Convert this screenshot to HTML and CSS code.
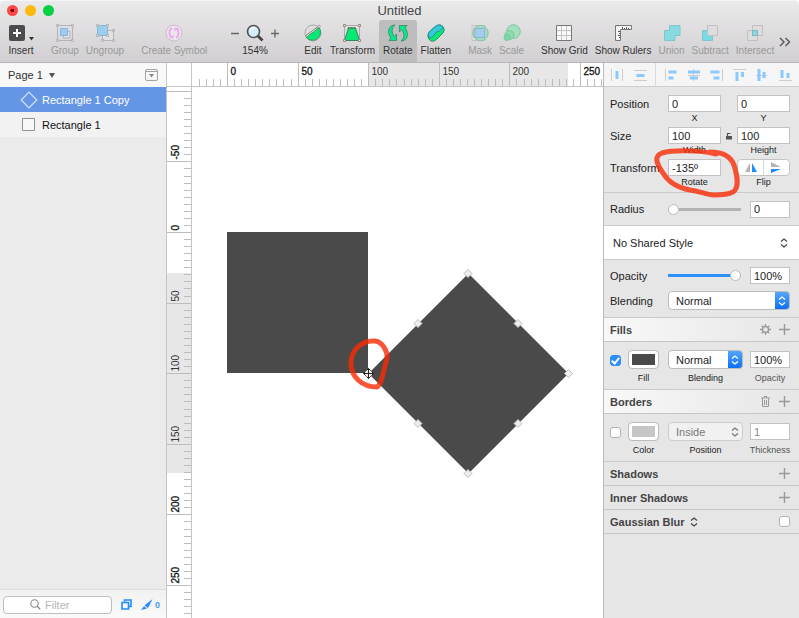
FILE: index.html
```html
<!DOCTYPE html>
<html lang="en">
<head>
<meta charset="utf-8">
<title>Untitled</title>
<link rel="stylesheet" href="styles.css">
</head>
<body>
<div class="window">
  <header class="chrome">
    <div class="titlebar">
      <div class="lights"><i class="light red"></i><i class="light yellow"></i><i class="light green"></i></div>
      <h1>Untitled</h1>
    </div>
    <nav class="toolbar" aria-label="Toolbar">
      <div class="group">
        <button class="tool insert" type="button"><svg width="26" height="18" viewBox="0 0 26 18"><rect x="1" y="1" width="16" height="16" rx="2" fill="#4c4b4d"/><path d="M5 9h8M9 5v8" stroke="#fff" stroke-width="2"/><path d="M21 13h5l-2.500 3.500z" fill="#333"/></svg><span>Insert</span></button>
      </div>
      <div class="group">
        <button class="tool" type="button" disabled><svg width="18" height="18" viewBox="0 0 18 18"><g fill="none" stroke="#b4b3b5"><path d="M1.500 1.500h15v15h-15z"/><path d="M7.500 7.500h6.500v6.500h-6.500z" fill="#e4e4e4"/></g><path d="M4.500 4.500h7v7h-7z" fill="#9dcdec" stroke="#84b7de"/><g fill="#e0e0e0" stroke="#b4b3b5"><path d="M.5.5h2v2h-2zM15.500.5h2v2h-2zM.5 15.500h2v2h-2zM15.500 15.500h2v2h-2z"/></g></svg><span>Group</span></button>
        <button class="tool" type="button" disabled><svg width="20" height="18" viewBox="0 0 20 18"><path d="M7.500 6.500h11v10h-11z" fill="#e2e1e3" stroke="#b4b3b5"/><path d="M2.500 1.500h10v10h-10z" fill="#9dcdec" stroke="#84b7de"/><g fill="#e0e0e0" stroke="#b4b3b5"><path d="M1.500.5h2v2h-2zM11.500.5h2v2h-2zM1.500 10.500h2v2h-2zM11.500 10.500h2v2h-2zM17.500 5.500h2v2h-2zM17.500 15.500h2v2h-2zM6.500 15.500h2v2h-2z"/></g></svg><span>Ungroup</span></button>
      </div>
      <div class="group">
        <button class="tool" type="button" disabled><svg width="18" height="18" viewBox="0 0 18 18"><circle cx="9" cy="9" r="8" fill="#ece5ec" stroke="#d0b7d2"/><g fill="none" stroke="#eba6ec" stroke-width="1.800"><path d="M7 4.500Q4.500 5 4.500 9t3 4.500M11 13.500q2.500-.5 2.500-4.500t-3-4.500"/><path d="M5 13.500h3v-2.500M13 4.500h-3v2.500" stroke-width="1.200"/></g></svg><span>Create Symbol</span></button>
      </div>
      <div class="group zoom">
        <button class="step" type="button" aria-label="Zoom out"><svg width="9" height="18" viewBox="0 0 9 18"><path d="M1 9.500h8" stroke="#666" stroke-width="1.300"/></svg></button>
        <button class="tool" type="button"><svg width="18" height="18" viewBox="0 0 18 18"><path d="M11.500 11.500l5 5" stroke="#444" stroke-width="2.800"/><circle cx="7.500" cy="7.500" r="6" fill="#d5edf9" stroke="#555" stroke-width="1.700"/><path d="M4 6q1-3 5-2" stroke="#fff" stroke-width="1.500" fill="none"/></svg><span>154%</span></button>
        <button class="step" type="button" aria-label="Zoom in"><svg width="9" height="18" viewBox="0 0 9 18"><path d="M0 9.500h8M4 5.500v8" stroke="#666" stroke-width="1.300"/></svg></button>
      </div>
      <div class="group paths">
        <button class="tool" type="button"><svg width="18" height="18" viewBox="0 0 18 18"><circle cx="9" cy="9" r="8" fill="#dedede" stroke="#aaa"/><path d="M15 3.500A8 8 0 1 1 2 13C5 13 5 10 8 9s4-4 7-5.500z" fill="#08e874" stroke="#419768"/><path d="M1 12L15 2" stroke="#888"/><circle cx="15" cy="2.500" r="1.300" fill="#eee" stroke="#999"/></svg><span>Edit</span></button>
        <button class="tool" type="button"><svg width="18" height="18" viewBox="0 0 18 18"><path d="M1.500 1.500h15v15h-15z" fill="none" stroke="#aaa"/><path d="M5.500 4h7l4 12.500h-15z" fill="#08e874" stroke="#378457"/><path d="M4.500 4h9" stroke="#555" stroke-dasharray="2 1"/><g fill="#eee" stroke="#938989"><path d="M.5.5h2v2h-2zM15.500.5h2v2h-2zM.5 15.500h2v2h-2zM15.500 15.500h2v2h-2z"/></g></svg><span>Transform</span></button>
        <button class="tool active" type="button"><svg width="22" height="18" viewBox="0 0 22 18"><g fill="#08e88b" stroke="#318562" stroke-width=".8"><path d="M8 1C1.500 1-.5 8.500 4 14L2 16.500H9.500V10L7.500 12.500C4.500 9.500 4 4 8 1z"/><path transform="rotate(180 11 9)" d="M8 1C1.500 1-.5 8.500 4 14L2 16.500H9.500V10L7.500 12.500C4.500 9.500 4 4 8 1z"/></g></svg><span>Rotate</span></button>
        <button class="tool" type="button"><svg width="18" height="18" viewBox="0 0 18 18"><path d="M2 8L9 2Q13.500-.5 16 2.500T16 9L9.500 15.500Q5 19 2.200 15.500T2 8z" fill="#08e874" stroke="#338b64"/><path d="M2 8L9 2C12 0 15 1 15.500 3.500 14 7.500 11 7 9.500 8S7 13 2.500 14Q.2 11 2 8z" fill="#36c9d8" stroke="#2a8f9a"/></svg><span>Flatten</span></button>
      </div>
      <div class="group">
        <button class="tool" type="button" disabled><svg width="18" height="18" viewBox="0 0 18 18"><path d="M1 1.500h13v15H1z" fill="#dedede" stroke="#c4c3c5"/><circle cx="9.500" cy="9" r="7.700" fill="#a1dfbd" stroke="#8cbfa5"/><path d="M4 4.500h9.500v9H4z" fill="#a4cdea" stroke="#8bafdf"/></svg><span>Mask</span></button>
        <button class="tool" type="button" disabled><svg width="18" height="18" viewBox="0 0 18 18"><g stroke="#7fc4a0"><circle cx="10.500" cy="7.500" r="6.800" fill="#a1dfbd"/><circle cx="6.500" cy="11" r="4.500" fill="#8cdcb0"/><circle cx="4" cy="13.500" r="3" fill="#78dca5"/></g></svg><span>Scale</span></button>
      </div>
      <div class="group">
        <button class="tool" type="button"><svg width="18" height="18" viewBox="0 0 18 18"><path d="M1.500 1.500h15v15h-15z" fill="#f8f8f8" stroke="#777"/><path d="M6.500 2v14M11.500 2v14M2 6.500h14M2 11.500h14" stroke="#c4c4c4"/></svg><span>Show Grid</span></button>
        <button class="tool" type="button"><svg width="18" height="18" viewBox="0 0 18 18"><path d="M1.500 1.500h16v4h-11v11h-5z" fill="#f5f5f5" stroke="#777"/><path d="M8.500 5V3M10.500 5V4M12.500 5V3M14.500 5V4M6 7.500H4M6 9.500H5M6 11.500H4M6 13.500H5" stroke="#555"/></svg><span>Show Rulers</span></button>
        <button class="tool" type="button" disabled><svg width="18" height="18" viewBox="0 0 18 18"><path d="M6.500 1.500h10.500v10h-5v5H1.500v-10h5z" fill="#87dae0" stroke="#83c4cc"/></svg><span>Union</span></button>
        <button class="tool" type="button" disabled><svg width="18" height="18" viewBox="0 0 18 18"><path d="M1.500 6.500h10v10h-10z" fill="#77dbe1" stroke="#83c4cc"/><path d="M6.500 1.500h10v10h-10z" fill="#dddcde" stroke="#c0bfc1"/></svg><span>Subtract</span></button>
        <button class="tool" type="button" disabled><svg width="18" height="18" viewBox="0 0 18 18"><path d="M6.500 1.500h10v10h-10zM1.500 6.500h10v10h-10z" fill="#dddcde" stroke="#c0bfc1"/><path d="M6.500 6.500h5v5h-5z" fill="#87dae0" stroke="#83b4bc"/></svg><span>Intersect</span></button>
        <button class="step more" type="button" aria-label="More tools"><svg width="12" height="18" viewBox="0 0 12 18"><path d="M1 5l4 4-4 4M6.500 5l4 4-4 4" fill="none" stroke="#555" stroke-width="1.400"/></svg></button>
      </div>
    </nav>
  </header>

  <main class="workspace">
    <aside class="layers">
      <button class="page" type="button"><span>Page 1</span><svg width="6" height="5" viewBox="0 0 6 5"><path d="M0 0h6L3 5z" fill="#555"/></svg><svg class="toggle" width="13" height="12" viewBox="0 0 13 12"><rect x=".5" y=".5" width="12" height="11" rx="1.500" fill="#f6f6f6" stroke="#a5a5a5"/><path d="M1 2.500h11" stroke="#a5a5a5"/><path d="M4 5h5L6.500 8.500z" fill="#888"/></svg></button>
      <ul class="list">
        <li class="layer selected"><svg width="18" height="18" viewBox="0 0 18 18"><path d="M9 1.200L16.800 9 9 16.800 1.200 9z" fill="none" stroke="#d6e4fb" stroke-width="1.200"/></svg>Rectangle 1 Copy</li>
        <li class="layer"><svg width="18" height="18" viewBox="0 0 18 18"><path d="M2.500 2.500h12v12h-12z" fill="#f8f8f8" stroke="#929292"/></svg>Rectangle 1</li>
      </ul>
      <footer class="filterbar">
        <label class="filter"><svg width="11" height="11" viewBox="0 0 11 11"><circle cx="4.500" cy="4.500" r="3.700" fill="none" stroke="#888" stroke-width="1.100"/><path d="M7.200 7.200l3 3" stroke="#888" stroke-width="1.300"/></svg><input type="text" placeholder="Filter" aria-label="Filter"></label>
        <button type="button" aria-label="Slices"><svg width="11" height="11" viewBox="0 0 11 11"><path d="M3.500 2.500v-1.500h6.500v6.500h-2M1 3.500h6.500v6.500H1z" fill="none" stroke="#1e8bff" stroke-width="1.600"/></svg></button>
        <button class="count" type="button"><svg width="12" height="11" viewBox="0 0 12 11"><path d="M11.500 0L7 9 3.500 6.500zM3 7.200l3 2.300L0 11z" fill="#1e8bff"/></svg><span>0</span></button>
      </footer>
    </aside>

    <section class="editor">
      <div class="corner"></div>
      <svg class="ruler ruler-x" data-axis="x"></svg>
      <svg class="ruler ruler-y" data-axis="y"></svg>
      <div class="canvas">
        <svg class="artwork" width="412" height="532">
          <path d="M35 145h141v141h-141z" fill="#4a4a4a"/>
          <path d="M276.500 186.500l100 100-100 100-100-100z" fill="#4a4a4a" stroke="#a0a0a0"/>
          <g fill="#eee" stroke="#bdbdbd">
            <path d="M276 182.500l4 4-4 4-4-4zM376.500 282.500l4 4-4 4-4-4zM276 382.500l4 4-4 4-4-4zM226 232.500l4 4-4 4-4-4zM326 232.500l4 4-4 4-4-4zM226 332.500l4 4-4 4-4-4zM326 332.500l4 4-4 4-4-4z"/>
            <path d="M176.500 281.500l5 5-5 5-5-5z"/>
          </g>
          <path d="M171.500 286.500h10M176.500 281.500v10M174.500 283.500l2-2 2 2M174.500 289.500l2 2 2-2M173.500 284.500l-2 2 2 2M179.500 284.500l2 2-2 2" fill="none" stroke="#222"/>
          <path class="marker" d="M183 254C170 253 159 263 159 276C159 290 170 300 185 300C190 297 191 284 195 272C196 265 191 255 183 254z"/>
        </svg>
      </div>
    </section>

    <aside class="inspector">
      <div class="align">
        <svg width="196" height="24" viewBox="0 0 196 24">
          <path d="M7.500 6v12M18.500 6v12M30 7.500h13M30 17.500h13M61.500 6v12M84 12.500h12M89.500 6v12M118.500 6v12M129 6.500h13M152 12.500h11M175 17.500h13" stroke="#cdcdcd" fill="none"/>
          <path d="M51.500 0v24" stroke="#dadada"/>
          <path d="M13 8v8M32.500 12.500h8M64.500 9h8M64.500 15h5M84 9h12M86 15h8M106.500 9h9M109.500 15h6M133 9v9M138.500 9v5M155 6v12M160 9v6M178 7v8M184 10v5" stroke="#8bc8fb" stroke-width="3"/>
        </svg>
      </div>
      <div class="panel geometry">
        <div class="row"><span class="name">Position</span>
          <label class="field"><input type="text" value="0"><span>X</span></label><i class="link"></i>
          <label class="field"><input type="text" value="0"><span>Y</span></label></div>
        <div class="row"><span class="name">Size</span>
          <label class="field"><input type="text" value="100"><span>Width</span></label>
          <i class="link"><svg width="8" height="8" viewBox="0 0 8 8"><path d="M1 4h6v3.500H1z" fill="#555"/><path d="M2.500 4V1.500h3" fill="none" stroke="#555" stroke-width="1.200"/></svg></i>
          <label class="field"><input type="text" value="100"><span>Height</span></label></div>
        <div class="row"><span class="name">Transform</span>
          <label class="field"><input type="text" value="-135º"><span>Rotate</span></label><i class="link"></i>
          <div class="field"><div class="flip"><button type="button" aria-label="Flip horizontally"><svg width="12" height="10" viewBox="0 0 12 10"><path d="M5 0v9H0z" fill="#b5b5b5"/><path d="M7 0v9h5z" fill="#1e8bff"/></svg></button><button type="button" aria-label="Flip vertically"><svg width="11" height="12" viewBox="0 0 11 12"><path d="M0 0l10 5H0z" fill="#b5b5b5"/><path d="M0 7h10L0 11z" fill="#1e8bff"/></svg></button></div><span>Flip</span></div></div>
      </div>
      <div class="panel radius">
        <label class="name" for="radius">Radius</label><input id="radius" class="slider" type="range" value="0"><input class="small" type="text" value="0" aria-label="Radius value">
      </div>
      <button class="shared" type="button">No Shared Style<svg width="8" height="10" viewBox="0 0 8 10"><path d="M1 3.500L4 1l3 2.500M1 6.500L4 9l3-2.500" fill="none" stroke="#444" stroke-width="1.200"/></svg></button>
      <div class="panel blend">
        <div class="line"><label class="name" for="opacity">Opacity</label><input id="opacity" class="slider full" type="range" value="100"><input class="small" type="text" value="100%" aria-label="Opacity value"></div>
        <div class="line"><label class="name" for="blend">Blending</label><div class="select"><select id="blend"><option>Normal</option></select><svg viewBox="0 0 8 10" width="8" height="10"><path d="M1 3.500L4 1l3 2.500M1 6.500L4 9l3-2.500" fill="none" stroke="currentColor" stroke-width="1.300"/></svg></div></div>
      </div>
      <h2 class="lit">Fills<span><svg width="11" height="11" viewBox="0 0 11 11"><circle cx="5.500" cy="5.500" r="3" fill="none" stroke="#999" stroke-width="1.400"/><path d="M5.500 0v2M5.500 9v2M0 5.500h2M9 5.500h2M1.600 1.600l1.500 1.500M7.900 7.900l1.500 1.500M1.600 9.400l1.500-1.500M7.900 3.100l1.500-1.500" stroke="#999" stroke-width="1.300"/></svg><svg width="11" height="11" viewBox="0 0 11 11"><path d="M0 5.500h11M5.500 0v11" stroke="#999" stroke-width="1.400"/></svg></span></h2>
      <div class="panel style">
        <input class="check" type="checkbox" checked aria-label="Fill enabled">
        <label class="cell"><button class="swatch dark" type="button" aria-label="Fill colour"></button><span>Fill</span></label>
        <label class="cell wide"><span class="select"><select><option>Normal</option></select><svg viewBox="0 0 8 10" width="8" height="10"><path d="M1 3.500L4 1l3 2.500M1 6.500L4 9l3-2.500" fill="none" stroke="currentColor" stroke-width="1.300"/></svg></span><span>Blending</span></label>
        <label class="cell amount"><input class="small" type="text" value="100%"><span>Opacity</span></label>
      </div>
      <h2 class="lit">Borders<span><svg width="11" height="11" viewBox="0 0 11 11"><path d="M1 2h9M4 1.500V.5h3v1M2.500 2.500v8h6v-8M4.500 4v5M6.500 4v5" fill="none" stroke="#999"/></svg><svg width="11" height="11" viewBox="0 0 11 11"><path d="M0 5.500h11M5.500 0v11" stroke="#999" stroke-width="1.400"/></svg></span></h2>
      <div class="panel style">
        <input class="check" type="checkbox" aria-label="Border enabled">
        <label class="cell"><button class="swatch" type="button" aria-label="Border colour"></button><span>Color</span></label>
        <label class="cell wide"><span class="select"><select disabled><option>Inside</option></select><svg viewBox="0 0 8 10" width="8" height="10"><path d="M1 3.500L4 1l3 2.500M1 6.500L4 9l3-2.500" fill="none" stroke="currentColor" stroke-width="1.300"/></svg></span><span>Position</span></label>
        <label class="cell amount"><input class="small" type="text" value="1" disabled><span>Thickness</span></label>
      </div>
      <h2>Shadows<span><svg width="11" height="11" viewBox="0 0 11 11"><path d="M0 5.500h11M5.500 0v11" stroke="#999" stroke-width="1.400"/></svg></span></h2>
      <h2>Inner Shadows<span><svg width="11" height="11" viewBox="0 0 11 11"><path d="M0 5.500h11M5.500 0v11" stroke="#999" stroke-width="1.400"/></svg></span></h2>
      <h2>Gaussian Blur<svg class="kind" width="8" height="10" viewBox="0 0 8 10"><path d="M1 3.500L4 1l3 2.500M1 6.500L4 9l3-2.500" fill="none" stroke="#444" stroke-width="1.300"/></svg><span><input class="check" type="checkbox" aria-label="Gaussian Blur"></span></h2>
      <svg class="note" width="92" height="54" viewBox="0 0 92 54"><path class="marker" d="M62 9C45 5 18 5 8 8C0 11 2 18 9 28C15 38 24 43 36 45C46 46 52 50 60 50C70 50 75 49 79 47C86 42 83 30 80 20C77 12 70 7 56 7"/></svg>
    </aside>
  </main>
</div>
<script src="rulers.js"></script>
</body>
</html>
```
FILE: styles.css
```css
* { box-sizing: border-box; }
body { margin: 0; background: #fff; color: #222; font: 11px/14px "Liberation Sans", Arial, sans-serif; }
button, input, select { font: inherit; color: inherit; }
button { border: 0; padding: 0; background: none; }
svg { display: block; flex: none; }
i { font-style: normal; }

.window { min-height: 100vh; display: flex; flex-direction: column; border-radius: 5px 5px 0 0; overflow: hidden; }
.chrome { background: linear-gradient(#ebeaeb, #d1cfd1); border-bottom: 1px solid #b8b7b8; border-top: 1px solid #f4f4f4; }
.titlebar { height: 19px; display: grid; grid-template-columns: 1fr auto 1fr; align-items: center; }
.titlebar h1 { margin: 0; font-size: 13px; line-height: 18px; font-weight: 400; color: #444; }
.lights { display: flex; gap: 7px; padding-left: 7px; }
.light { width: 11px; height: 11px; border-radius: 50%; }
.red { background: radial-gradient(#700 0 2px, #fc4744 2px); }
.yellow { background: #fdb90c; }
.green { background: #08d045; }

.toolbar { display: flex; gap: 17px; padding-left: 8px; }
.group { display: flex; gap: 7px; }
.tool { height: 42px; padding-top: 4px; display: flex; flex-direction: column; align-items: center; gap: 3px; font-size: 10px; line-height: 12px; color: #333; white-space: nowrap; }
.tool:disabled { color: #999; }
.tool.active { background: #bebdbe; border-radius: 3px 3px 0 0; padding: 4px 4px 0; margin: 0 -4px; }
.step { padding-top: 4px; align-self: flex-start; }
.more { padding-top: 13px; margin-left: -2px; }
.zoom { gap: 3px; margin: 0 7px 0 6px; }
.paths { gap: 8px; }

.workspace { flex: 1; display: grid; grid-template-columns: 167px minmax(0, 1fr) 196px; }

.layers { display: flex; flex-direction: column; background: #ebebeb; border-right: 1px solid #c4c4c4; }
.page { display: flex; align-items: center; gap: 6px; height: 24px; padding: 0 8px; background: #f8f8f8; color: #333; }
.toggle { margin-left: auto; }
.list { margin: 0; padding: 0; list-style: none; flex: 1; }
.layer { display: flex; align-items: center; gap: 4px; height: 25px; padding-left: 20px; background: #f2f2f2; color: #111; }
.layer.selected { background: #6596e6; color: #fff; }
.filterbar { display: flex; align-items: center; gap: 9px; height: 30px; padding: 0 6px 0 3px; background: linear-gradient(#f1f1f1, #fafafa); border-top: 1px solid #dcdcdc; }
.filter { flex: 1; display: flex; align-items: center; gap: 4px; height: 18px; padding-left: 26px; background: #fff; border: 1px solid #bfbfbf; border-radius: 4px; }
.filter input { width: 100%; min-width: 0; border: 0; padding: 0; background: none; }
.filter input::placeholder { color: #b5b5b5; }
.count { display: flex; align-items: center; gap: 2px; font-size: 9px; font-weight: 700; color: #4c9ef0; }

.editor { display: grid; grid-template: 24px minmax(0, 1fr) / 25px minmax(0, 1fr); background: #fff; overflow: hidden; }
.corner, .ruler-y { border-right: 1px solid #c6c6c6; }
.corner, .ruler-x { border-bottom: 1px solid #c6c6c6; }
.ruler { width: 100%; height: 100%; overflow: hidden; font-size: 10px; }
.ruler path { stroke: #bdbdbd; fill: none; }
.ruler rect { fill: #e7e7e7; }
.ruler text { fill: #333; }
.ruler text.clear { fill: #111; stroke: #111; stroke-width: .3px; }
.canvas { overflow: hidden; }
.marker { fill: none; stroke: #fa2b05; stroke-width: 5px; stroke-linecap: round; stroke-linejoin: round; opacity: .8; }

.inspector { position: relative; background: #e6e6e6; border-left: 1px solid #b9b9b9; color: #222; }
.align { height: 24px; background: #f5f5f5; border-bottom: 1px solid #cfcfcf; overflow: hidden; }
.panel { padding: 0 9px 0 6px; border-bottom: 1px solid #cacaca; }
.inspector input[type="text"] { height: 17px; padding: 0 3px; border: 1px solid #c2c2c2; border-radius: 0; background: #fff; color: #222; }
.inspector input[type="text"]:disabled { color: #888; }
.geometry { padding-top: 8px; }
.row { display: grid; grid-template-columns: 58px 1fr 16px 1fr; height: 32px; }
.row:last-child { height: 33px; }
.name { width: 58px; line-height: 18px; }
.field { display: flex; flex-direction: column; min-width: 0; font-size: 9px; line-height: 12px; text-align: center; }
.field input { width: 100%; font-size: 11px; }
.link { display: flex; height: 17px; align-items: center; justify-content: center; }
.flip { display: flex; height: 17px; background: #fff; border: 1px solid #c4c4c4; border-radius: 4px; }
.flip button { flex: 1; display: grid; place-items: center; }
.flip button + button { border-left: 1px solid #d8d8d8; }
.radius { display: flex; align-items: center; height: 33px; }
.small { width: 40px; flex: none; }
.slider { appearance: none; flex: 1; min-width: 0; height: 12px; margin: 0 9px 0 0; background: linear-gradient(#b3b3b3, #b3b3b3) center / 100% 3px no-repeat; }
.slider::-webkit-slider-thumb { appearance: none; width: 11px; height: 11px; border-radius: 50%; background: #fff; border: 1px solid #bbb; }
.slider.full { background-image: linear-gradient(#2e90fb, #2e90fb); }
.shared { display: flex; align-items: center; justify-content: space-between; width: 100%; height: 34px; padding: 0 11px 0 9px; background: #fff; border-bottom: 1px solid #cacaca; }
.blend { padding-top: 6px; padding-bottom: 7px; }
.line { display: flex; align-items: center; height: 19px; }
.line + .line { margin-top: 6px; }
.select { position: relative; flex: 1; display: block; min-width: 0; }
.select select { appearance: none; display: block; width: 100%; height: 19px; padding: 0 7px; border: 1px solid #bcbcbc; border-radius: 4px; font-size: 11px; background: linear-gradient(#58a9fd, #0a6cf5) right / 15px 100% no-repeat border-box, #fff; opacity: 1; }
.select svg { position: absolute; right: 4px; top: 5px; color: #fff; pointer-events: none; }
.select select:disabled { background: #f1f1f1; border-color: #cdcdcd; color: #777; }
.select select:disabled + svg { color: #777; }
.inspector h2 { display: flex; align-items: center; height: 24px; margin: 0; padding: 0 9px 0 6px; border-bottom: 1px solid #c6c6c6; font-size: 11px; color: #444; }
.inspector h2.lit { background: linear-gradient(90deg, #f8f8f8, #e6e6e6); }
.inspector h2 > span { display: flex; gap: 8px; margin-left: auto; }
.kind { margin-left: 5px; }
.style { display: flex; height: 48px; padding-top: 8px; }
.check { appearance: none; flex: none; width: 11px; height: 11px; margin: 0; border: 1px solid #b4b4b4; border-radius: 3px; background: #fff; }
.style .check { margin-top: 5px; }
.check:checked { border-color: #2d8efb; background: #2d8efb; display: grid; place-items: center; }
.check:checked::before { content: ""; width: 3px; height: 6px; margin-bottom: 2px; border: solid #fff; border-width: 0 2px 2px 0; rotate: 40deg; }
.cell { display: flex; flex-direction: column; gap: 3px; width: 31px; margin-left: 7px; font-size: 9px; line-height: 12px; text-align: center; white-space: nowrap; }
.cell.wide { flex: 1; width: auto; margin-left: 9px; }
.cell.wide .select { flex: none; }
.cell.amount { width: 40px; align-items: center; margin-left: 7px; color: #555; }
.cell input { font-size: 11px; margin: 1px 0; }
.swatch { height: 19px; border: 1px solid #bcbcbc; border-radius: 4px; padding: 3px; background: #c6c6c6 content-box; box-shadow: inset 0 0 0 3px #fff; }
.swatch.dark { background-color: #4a4a4a; }
.note { position: absolute; left: 50px; top: 82px; }
```
FILE: rulers.js
```js
// Draws both rulers: one tick per 5 units, a full line and a label per 50.
const SCALE = 1.412;
const SETTINGS = {
  x: { zero: 35, depth: 23, from: 176, to: 376 },
  y: { zero: 145, depth: 24, from: 186, to: 386 }
};
for (const ruler of document.querySelectorAll('.ruler')) {
  const axis = ruler.dataset.axis;
  const { zero, depth, from, to } = SETTINGS[axis];
  const length = axis === 'x' ? ruler.getBoundingClientRect().width : ruler.getBoundingClientRect().height;
  let ticks = '';
  let labels = '';
  for (let unit = -100; zero + unit * SCALE < length; unit += 5) {
    const at = Math.round(zero + unit * SCALE) + 0.5;
    if (at < 1) continue;
    const major = unit % 50 === 0;
    const start = major ? 0 : depth - 7;
    ticks += axis === 'x' ? `M${at} ${start}V${depth}` : `M${start} ${at}H${depth}`;
    // A label needs room between its line and the ruler's start.
    if (major && (axis === 'x' || at > 20)) {
      const tone = at < from || at > to ? 'clear' : '';
      labels += axis === 'x'
        ? `<text class="${tone}" x="${at + 3}" y="12">${unit}</text>`
        : `<text class="${tone}" transform="translate(12 ${at - 2}) rotate(-90)">${unit}</text>`;
    }
  }
  const band = axis === 'x'
    ? `<rect x="${from}" width="${to - from}" height="${depth}"/>`
    : `<rect y="${from}" height="${to - from}" width="${depth}"/>`;
  ruler.innerHTML = `${band}<path d="${ticks}"/>${labels}`;
}
```
